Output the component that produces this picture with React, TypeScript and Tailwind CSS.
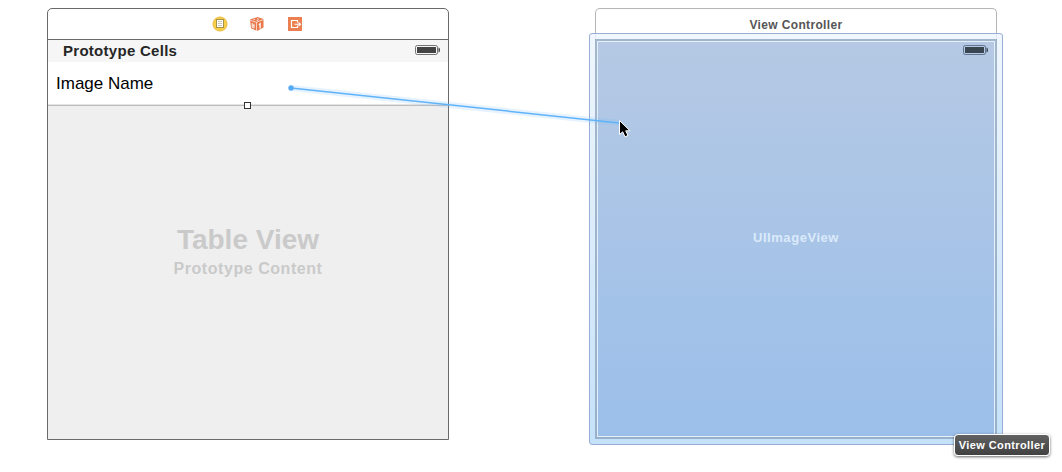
import React from "react";

function Battery({ className = "", color, dark }: { className?: string; color: string; dark: string }) {
  return (
    <svg className={className} width="26" height="11" viewBox="0 0 26 11">
      <rect x="0.5" y="0.5" width="22" height="9" rx="1.8" fill="none" stroke={color} />
      <rect x="2" y="2" width="19" height="6" fill={dark} />
      <path d="M23.500 2.500v5c.9-.2 1.500-1.200 1.500-2.500S24.400 2.700 23.500 2.500Z" fill={dark} />
    </svg>
  );
}

function ControllerIcon() {
  return (
    <svg width="16" height="16" viewBox="0 0 16 16">
      <circle cx="8" cy="8" r="7" fill="#f7cf49" stroke="#ebbb3e" />
      <rect x="4.500" y="3.500" width="7" height="8" fill="#fffef6" stroke="#a79148" />
      <path d="M6 5.500h4M6 7.500h4M6 9.500h4" stroke="#c9c5b8" strokeWidth="1" />
    </svg>
  );
}

function ResponderIcon() {
  return (
    <svg width="16" height="16" viewBox="0 0 16 16">
      <path d="M1 3.600 8.500 1l6 2v8.500L8 15 2 12.200Z" fill="#e9784b" />
      <path d="M1.300 4.300 7.500 6.300 14.500 3.500M7.500 6.300V15" fill="none" stroke="#fff" strokeOpacity="0.850" strokeWidth="0.800" />
      <path d="M4.500 3.900l1.600-.6M7.500 4.700l2-.7M8 2.600l1.700.6" stroke="#fff" strokeWidth="0.800" />
      <path d="M3.200 7v4.200l1.800.8V7.800M3.200 9l1.800.6" fill="none" stroke="#fff" strokeWidth="0.900" />
      <path d="M9.800 8.700l1.300-.9v4.600" fill="none" stroke="#fff" strokeWidth="1.300" />
    </svg>
  );
}

function ExitIcon() {
  return (
    <svg width="14" height="14" viewBox="0 0 14 14">
      <rect width="14" height="14" fill="#ea7f52" />
      <path d="M9.500 5.500v-2h-6v7h6v-2" fill="none" stroke="#fff" strokeWidth="1.200" />
      <path d="M6.500 7.300h5.500M10.500 5.500l2 1.800-2 1.800" fill="none" stroke="#fff" strokeWidth="1.100" />
    </svg>
  );
}

function TableScene() {
  return (
    <section className="flex h-[432px] w-[402px] flex-col overflow-hidden rounded-t-[5px] border border-[#6a6a6a] bg-white">
      <header className="flex h-[31px] shrink-0 items-center border-b border-[#6a6a6a] pl-[164px]">
        <ControllerIcon />
        <div className="ml-[21px] flex"><ResponderIcon /></div>
        <div className="ml-[23px] flex"><ExitIcon /></div>
      </header>
      <div className="flex h-[22px] shrink-0 justify-between bg-[#f6f6f6] pl-[15px] pr-[7px]">
        <span className="text-[15px] font-bold leading-[22px] tracking-[0.280px] text-[#262626]">Prototype Cells</span>
        <Battery className="mt-[5px]" color="#747474" dark="#444444" />
      </div>
      <div className="relative h-[43px] shrink-0 pl-2">
        <span className="text-[17px] leading-[44px] text-black">Image Name</span>
        <i className="absolute -bottom-[4px] left-[196px] size-[7px] border border-[#333] bg-white" />
      </div>
      <div className="flex flex-1 flex-col items-center border-t border-[#bdbdbd] bg-[#efefef] pt-[118px] font-bold text-[#cacaca] shadow-[0_-1px_0_#e4e4e4]">
        <div className="text-[28px] leading-8">Table View</div>
        <div className="mt-[3px] text-[16px] leading-5 tracking-[0.550px]">Prototype Content</div>
      </div>
    </section>
  );
}

function ImageScene() {
  return (
    <section className="relative h-[432px] w-[402px]">
      <header className="h-8 rounded-t-[5px] border border-b-0 border-[#b5b5b5] bg-white text-center text-[12px] font-bold leading-[32px] tracking-[0.350px] text-[#555]">
        View Controller
      </header>
      <div className="absolute -left-[6px] top-[25px] h-[412px] w-[414px] rounded-[3px] border border-[#97afd6] bg-linear-to-b from-[#ecf4fd]/80 to-[#bfdefa]/90 p-[5px]">
        <div className="h-full border-2 border-[#839db6]/70">
          <div className="relative flex h-full items-center justify-center border border-[#e4effa] bg-linear-to-b from-[#b5c9e4] to-[#9bbfea]">
            <Battery className="absolute right-[5px] top-[3px]" color="#60748d" dark="#3a4552" />
            <span className="-mt-0.5 text-[13px] font-bold tracking-[0.550px] text-[#dbeafa]">UIImageView</span>
          </div>
        </div>
      </div>
    </section>
  );
}

export default function App() {
  return (
    <main className="relative flex h-[472px] w-[1062px] gap-[146px] overflow-hidden bg-white pl-[47px] pt-2 font-['Liberation_Sans',Arial,sans-serif]">
      <TableScene />
      <ImageScene />
      <svg className="absolute left-0 top-0" width="1062" height="472" viewBox="0 0 1062 472">
        <path d="M291 88 619 123" stroke="#72baf8" strokeOpacity="0.180" strokeWidth="6" />
        <path d="M291 88 619 123" stroke="#60b3f8" strokeWidth="1.500" />
        <circle cx="291" cy="88" r="2.700" fill="#55aaf5" />
        <path d="M619.500 120.500v14l3.200-2.700 2.300 5 3-1.300-2.300-4.700h4.300Z" fill="#000" stroke="#fff" strokeWidth="1" />
      </svg>
      <div className="absolute left-[954px] top-[434px] h-[22px] w-[96px] rounded-[4px] border-[1.500px] border-white bg-linear-to-b from-[#626262] to-[#414141] text-center text-[11px] font-bold leading-[20px] tracking-[0.400px] whitespace-nowrap text-white shadow-[0_1px_3px_rgba(0,0,0,0.600)]">
        View Controller
      </div>
    </main>
  );
}
